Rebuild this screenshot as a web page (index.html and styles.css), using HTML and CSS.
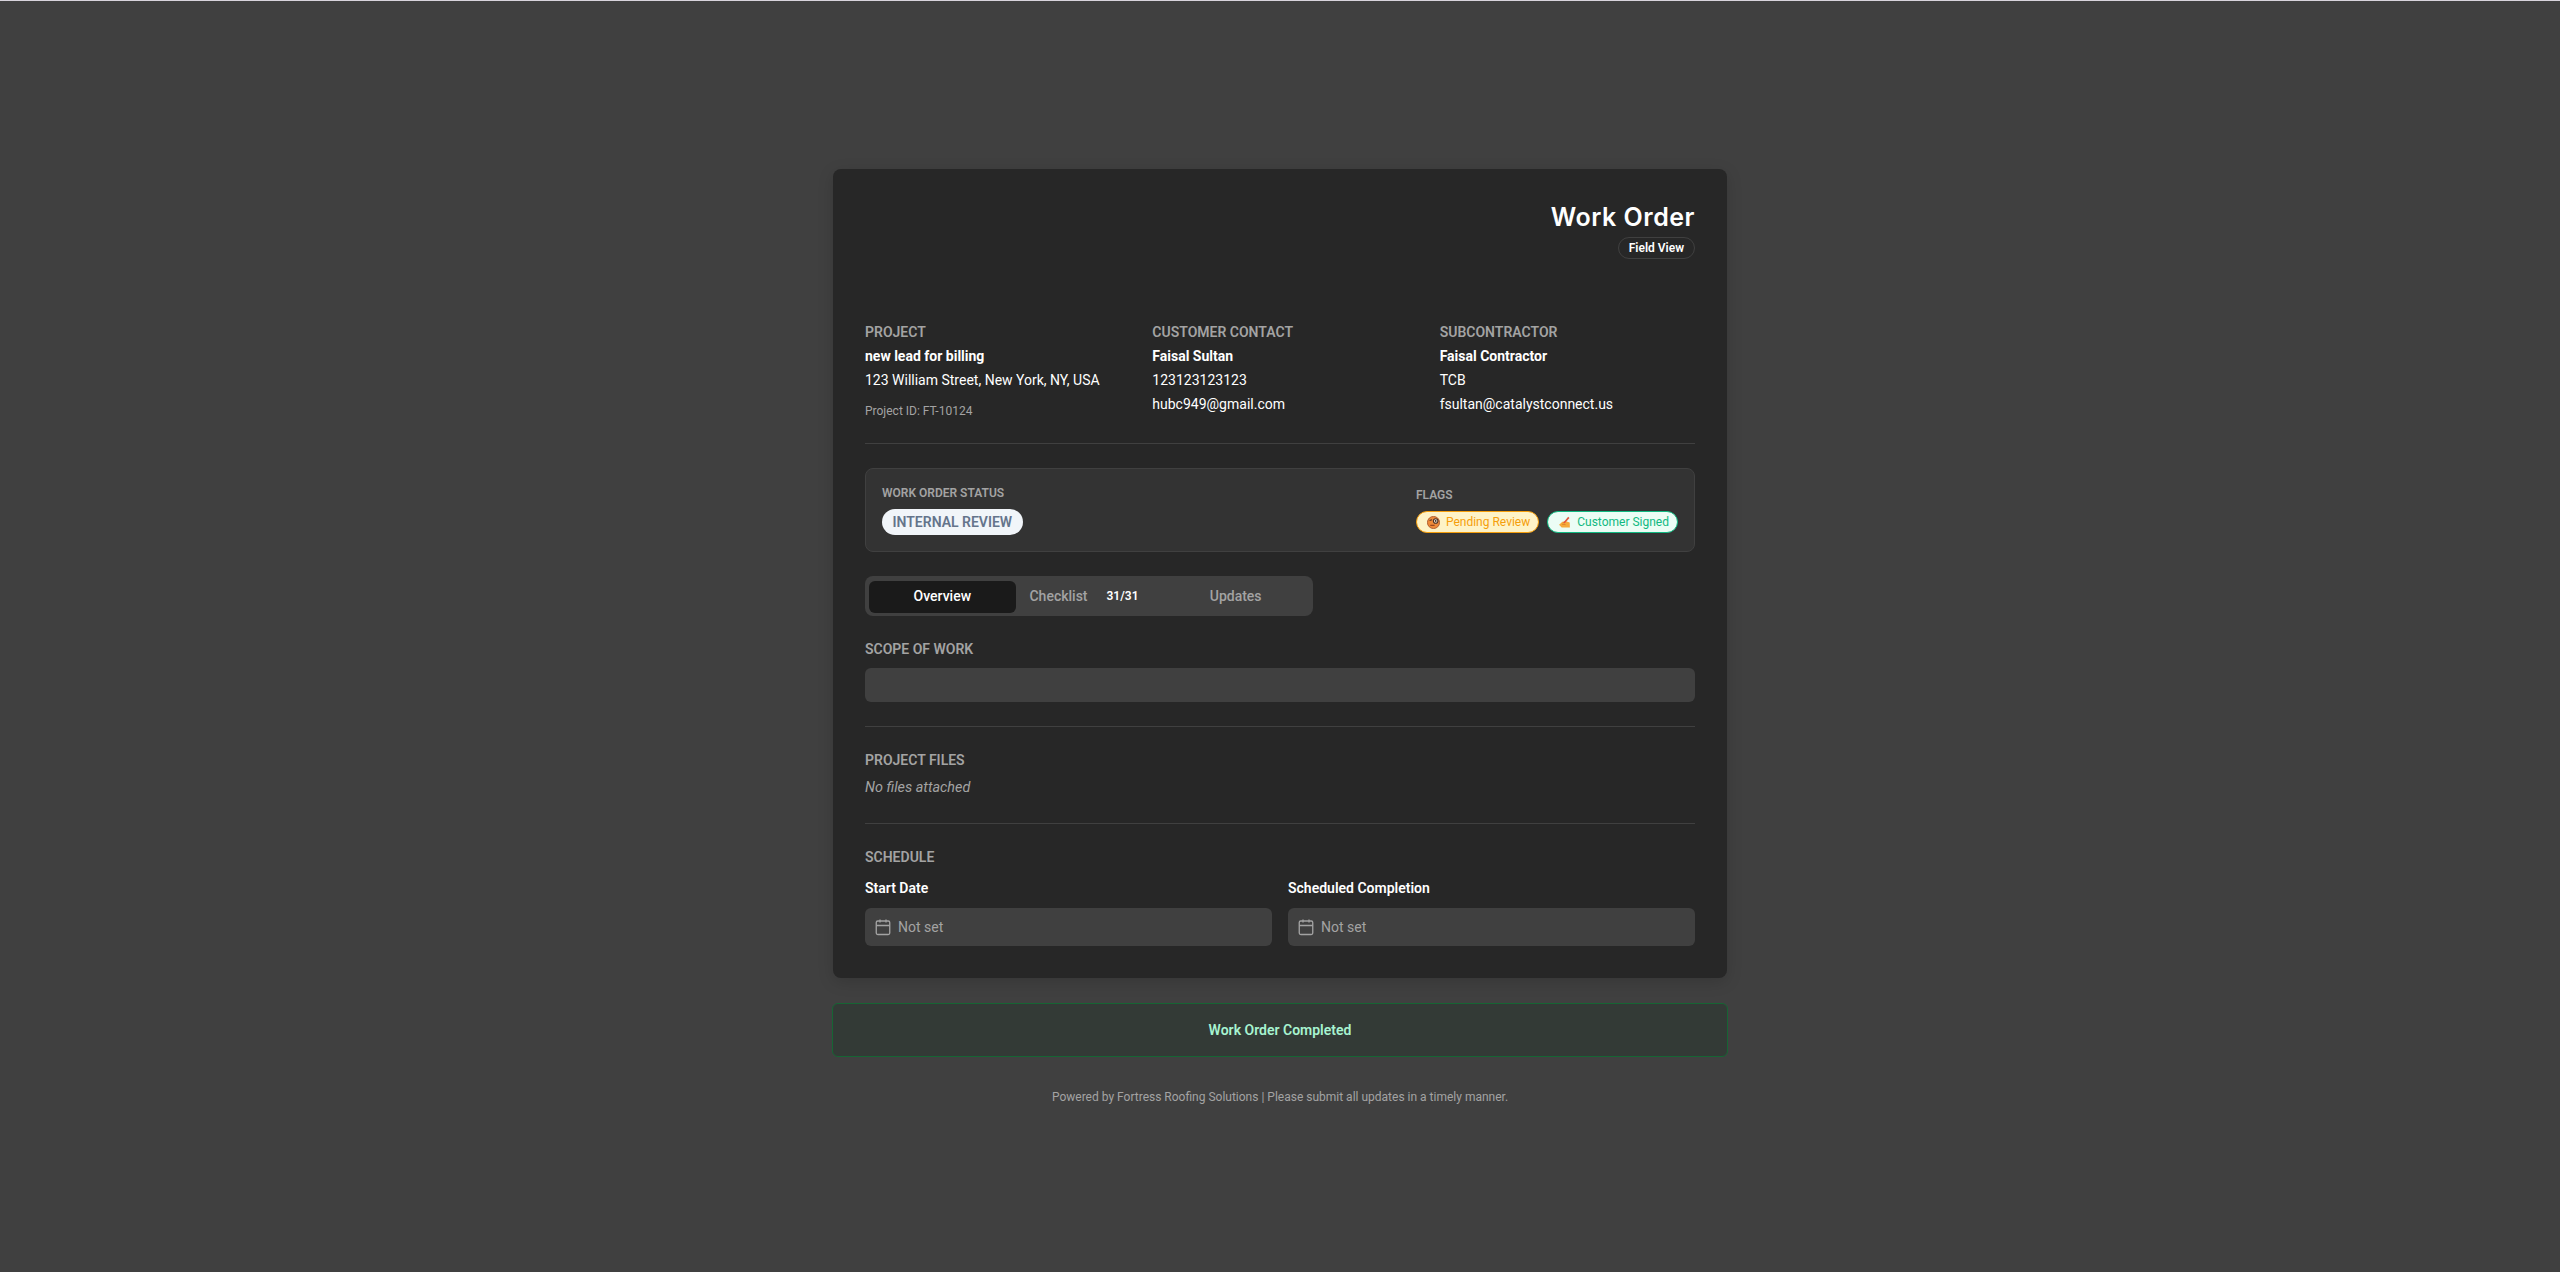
FILE: index.html
```html
<!DOCTYPE html>
<html lang="en">

<head>
    <meta charset="UTF-8">
    <meta name="viewport" content="width=device-width, initial-scale=1.0">
    <title>Work Order</title>
    <link rel="stylesheet" href="styles.css">
</head>

<body>
    <div class="container">
        <div class="card">
            <div class="header">
                <h1 class="title">Work Order</h1>
                <span class="view-tag">Field View</span>
            </div>

            <div class="info">
                <div class="info-col">
                    <p class="label">PROJECT</p>
                    <p class="strong">new lead for billing</p>
                    <p>123 William Street, New York, NY, USA</p>
                    <p class="project-id">Project ID: FT-10124</p>
                </div>
                <div class="info-col">
                    <p class="label">CUSTOMER CONTACT</p>
                    <p class="strong">Faisal Sultan</p>
                    <p>123123123123</p>
                    <p>hubc949@gmail.com</p>
                </div>
                <div class="info-col">
                    <p class="label">SUBCONTRACTOR</p>
                    <p class="strong">Faisal Contractor</p>
                    <p>TCB</p>
                    <p>fsultan@catalystconnect.us</p>
                </div>
            </div>

            <div class="status-box">
                <div class="status">
                    <p class="small-label">WORK ORDER STATUS</p>
                    <span class="status-pill">INTERNAL REVIEW</span>
                </div>
                <div class="flags">
                    <p class="small-label">FLAGS</p>
                    <div class="flag-list">
                        <span class="flag flag-pending">
                            <svg class="flag-icon" viewBox="0 0 12 12">
                                <circle cx="6" cy="6" r="5.6" fill="#ee8a3a" stroke="#a8552a" stroke-width="0.8"/>
                                <circle cx="8" cy="4.6" r="2.1" fill="#f4e6d6" stroke="#4a3328" stroke-width="1"/>
                                <circle cx="8" cy="4.6" r="0.8" fill="#33241d"/>
                                <path d="M2.4 4.2l2.2-0.8" stroke="#4a3328" stroke-width="1"/>
                                <path d="M3 8.6h4" stroke="#8a3d1e" stroke-width="1"/>
                            </svg>
                            Pending Review
                        </span>
                        <span class="flag flag-signed">
                            <svg class="flag-icon" viewBox="0 0 12 12">
                                <path d="M1 8l3-2.6 3.4-0.6 3.4 1.2 0.2 4.6H3.4z" fill="#f6a93b"/>
                                <path d="M4.6 6.4L9.4 0.8l1.2 1-4.4 5z" fill="#e2553d"/>
                                <path d="M3.6 7.6l3.4 0.4" stroke="#d8842a" stroke-width="0.8"/>
                            </svg>
                            Customer Signed
                        </span>
                    </div>
                </div>
            </div>

            <div class="tabs">
                <div class="tab active">Overview</div>
                <div class="tab">Checklist<span class="count">31/31</span></div>
                <div class="tab">Updates</div>
            </div>

            <div class="section scope">
                <p class="label">SCOPE OF WORK</p>
                <div class="scope-box"></div>
            </div>

            <div class="section files">
                <p class="label">PROJECT FILES</p>
                <p class="no-files">No files attached</p>
            </div>

            <div class="section">
                <p class="label">SCHEDULE</p>
                <div class="dates">
                    <div>
                        <p class="date-label">Start Date</p>
                        <div class="date-field">
                            <svg class="cal" viewBox="0 0 24 24"><rect x="3" y="4" width="18" height="18" rx="2"/><path d="M8 2v4M16 2v4M3 10h18"/></svg>
                            Not set
                        </div>
                    </div>
                    <div>
                        <p class="date-label">Scheduled Completion</p>
                        <div class="date-field">
                            <svg class="cal" viewBox="0 0 24 24"><rect x="3" y="4" width="18" height="18" rx="2"/><path d="M8 2v4M16 2v4M3 10h18"/></svg>
                            Not set
                        </div>
                    </div>
                </div>
            </div>
        </div>

        <div class="completed">Work Order Completed</div>

        <p class="footer">Powered by Fortress Roofing Solutions | Please submit all updates in a timely manner.</p>
    </div>
</body>

</html>
```

FILE: styles.css
```css
* {
    box-sizing: border-box;
}

html,
body {
    margin: 0;
    min-height: 100%;
}

body {
    background-color: #404040;
    border-top: 1px solid #d8d4dc;
    font-family: Roboto, "Liberation Sans", sans-serif;
    font-size: 14px;
    line-height: 24px;
    color: #fff;
}

p {
    margin: 0;
}

.container {
    width: 896px;
    margin: 0 auto;
    padding-top: 168px;
}

.card {
    margin: 0 1px;
    background-color: #272727;
    border-radius: 8px;
    padding: 32px;
    box-shadow: 0 4px 16px rgba(0, 0, 0, 0.15);
}

.header {
    display: flex;
    flex-direction: column;
    align-items: flex-end;
    height: 119px;
}

.title {
    margin: 0;
    font-family: Inter, sans-serif;
    font-size: 25px;
    font-weight: 600;
    line-height: 32px;
    letter-spacing: 0.5px;
}

.view-tag {
    margin-top: 4px;
    padding: 0 10px;
    border: 1px solid #404040;
    border-radius: 11px;
    font-size: 12px;
    font-weight: 600;
    line-height: 20px;
}

.info {
    display: grid;
    grid-template-columns: repeat(3, 1fr);
    column-gap: 32px;
    height: 124px;
    border-bottom: 1px solid #404040;
}

.label {
    font-weight: 600;
    color: #a3a3a3;
}

.strong {
    font-weight: 700;
}

.project-id {
    margin-top: 7px;
    font-size: 12px;
    color: #a3a3a3;
}

.status-box {
    display: flex;
    justify-content: space-between;
    margin-top: 24px;
    height: 84px;
    padding: 14px 16px;
    background-color: #333;
    border: 1px solid #404040;
    border-radius: 8px;
}

.small-label {
    font-size: 12px;
    font-weight: 600;
    line-height: 20px;
    color: #a3a3a3;
}

.status-pill {
    display: inline-block;
    margin-top: 6px;
    padding: 0 10.5px;
    background-color: #f1f5f9;
    border-radius: 13px;
    color: #64748b;
    font-weight: 600;
    line-height: 26px;
}

.flags {
    padding-top: 2px;
}

.flag-list {
    display: flex;
    gap: 8px;
    margin-top: 6px;
}

.flag {
    display: flex;
    align-items: center;
    gap: 6px;
    height: 22px;
    padding: 0 8px 0 10px;
    border: 1px solid;
    border-radius: 11px;
    font-size: 12px;
    font-weight: 400;
    line-height: 20px;
}

.flag-icon {
    width: 13px;
    height: 13px;
}

.flag-pending {
    background-color: #fef3c7;
    border-color: #f59e0b;
    color: #f59e0b;
}

.flag-signed {
    background-color: #ecfdf5;
    border-color: #10b981;
    color: #10b981;
}

.tabs {
    display: grid;
    grid-template-columns: repeat(3, 1fr);
    margin-top: 24px;
    width: 448px;
    height: 40px;
    padding: 5px 4px 3px;
    background-color: #404040;
    border-radius: 8px;
}

.tab {
    display: flex;
    align-items: center;
    justify-content: center;
    padding-bottom: 2px;
    border-radius: 6px;
    font-weight: 500;
    color: #a3a3a3;
}

.tab.active {
    background-color: #1a1a1a;
    color: #fff;
}

.count {
    padding: 0 10px 0 8px;
    margin-left: 11px;
    font-size: 12px;
    font-weight: 600;
    color: #fff;
}

.section {
    margin-top: 21px;
}

.scope-box {
    margin-top: 7px;
    height: 34px;
    background-color: #404040;
    border-radius: 6px;
}

.scope {
    height: 90px;
    border-bottom: 1px solid #404040;
}

.files {
    height: 76px;
    border-bottom: 1px solid #404040;
}

.no-files {
    margin-top: 4px;
    font-size: 14.4px;
    font-style: italic;
    color: #a3a3a3;
}

.dates {
    display: grid;
    grid-template-columns: repeat(2, 1fr);
    column-gap: 16px;
    margin-top: 7px;
}

.date-label {
    font-weight: 600;
    margin-bottom: 8px;
}

.date-field {
    display: flex;
    align-items: center;
    gap: 6px;
    height: 38px;
    padding: 0 9px 1px;
    background-color: #404040;
    border-radius: 6px;
    color: #a3a3a3;
}

.cal {
    width: 18px;
    height: 18px;
    fill: none;
    stroke: #a3a3a3;
    stroke-width: 1.75;
}

.completed {
    margin-top: 25px;
    height: 54px;
    background-color: #333a36;
    border: 1px solid #166534;
    border-radius: 6px;
    text-align: center;
    line-height: 52px;
    font-weight: 600;
    color: #a7f3d0;
}

.footer {
    margin-top: 28px;
    text-align: center;
    font-size: 12px;
    color: #a3a3a3;
}
```
